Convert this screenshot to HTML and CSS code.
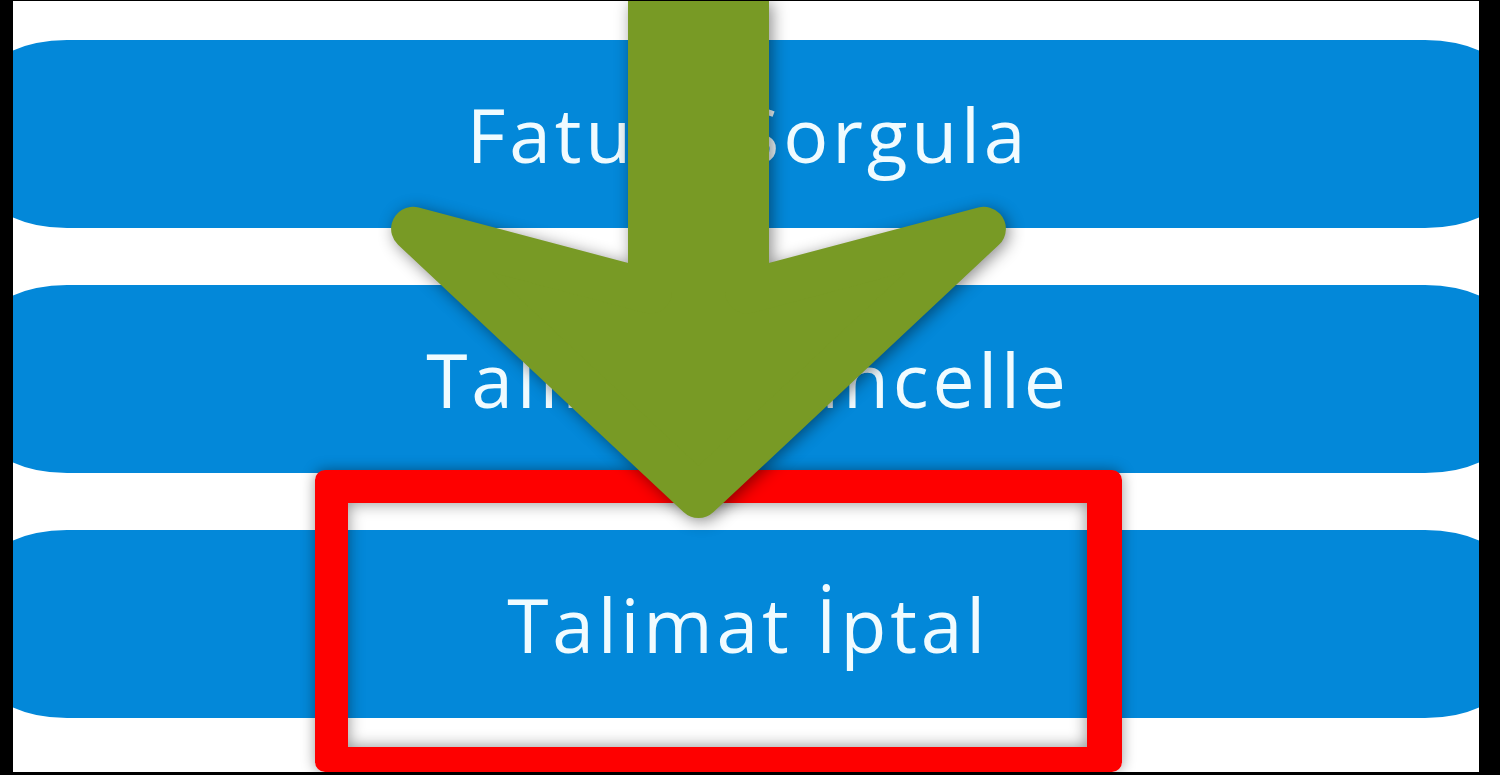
FILE: index.html
```html
<!DOCTYPE html>
<html lang="tr">
<head>
<meta charset="utf-8">
<title>Talimat İptal</title>
<link rel="stylesheet" href="styles.css">
</head>
<body>
<div class="screen">
  <div class="menu">
    <div class="btn">Fatura Sorgula</div>
    <div class="btn">Talimat Güncelle</div>
    <div class="btn">Talimat İptal</div>
  </div>
  <div class="highlight"></div>
  <svg class="arrow" viewBox="0 0 1500 775" xmlns="http://www.w3.org/2000/svg">
    <polygon points="650,-60 650,291.6 413.1,228.8 698.5,496 983.9,228.8 747,291.6 747,-60" fill="#789a25" stroke="#789a25" stroke-width="44" stroke-linejoin="round"/>
  </svg>
</div>
</body>
</html>
```

FILE: styles.css
```css
html, body {
  margin: 0;
  padding: 0;
  background: #000;
  width: 1500px;
  height: 775px;
  overflow: hidden;
}

.screen {
  position: relative;
  margin: 1px 0 0 13px;
  width: 1466px;
  height: 771px;
  background: #fff;
  overflow: hidden;
}

.menu {
  display: flex;
  flex-direction: column;
  gap: 57px;
  padding-top: 39px;
}

.btn {
  margin: 0 -26px;
  padding-left: 4px;
  height: 188px;
  background: #0388d9;
  border-radius: 80px / 40px;
  display: flex;
  align-items: center;
  justify-content: center;
  color: #f0fbff;
  font-family: "Open Sans", "DejaVu Sans", sans-serif;
  font-weight: 400;
  font-size: 75px;
  letter-spacing: 3.8px;
}

.highlight {
  position: absolute;
  left: 302px;
  top: 469px;
  width: 807px;
  height: 302px;
  box-sizing: border-box;
  border: 33px solid #fe0000;
  border-bottom-width: 25px;
  border-right-width: 35px;
  border-radius: 10px;
  box-shadow: 0 0 14px rgba(0, 0, 0, 0.4), inset 0 0 16px rgba(0, 0, 0, 0.45);
}

.arrow {
  position: absolute;
  left: -13px;
  top: -1px;
  width: 1500px;
  height: 775px;
  filter: drop-shadow(3px 3px 8px rgba(0, 0, 0, 0.45));
}
```
